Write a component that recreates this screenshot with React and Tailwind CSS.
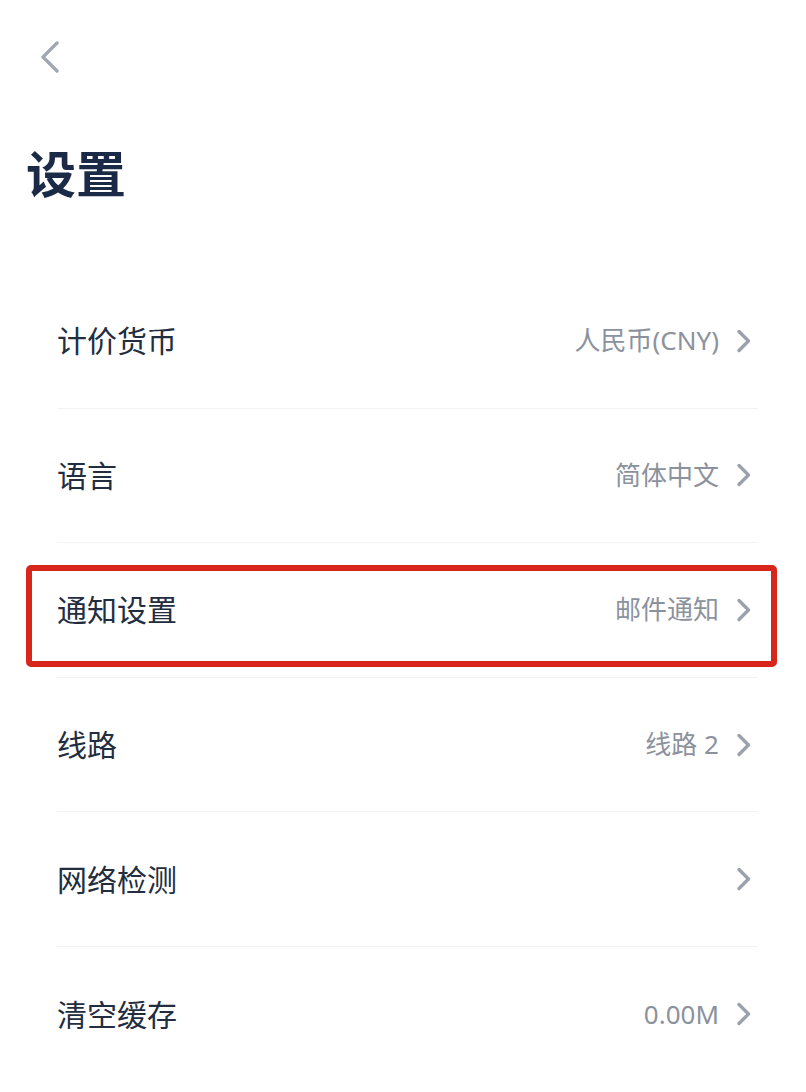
import React from 'react';

const rows = [
  { label: '计价货币', value: '人民币(CNY)' },
  { label: '语言', value: '简体中文' },
  { label: '通知设置', value: '邮件通知' },
  { label: '线路', value: '线路 2' },
  { label: '网络检测', value: '' },
  { label: '清空缓存', value: '0.00M' },
];

const Chevron = () => (
  <svg width="16" height="24" viewBox="0 0 16 24" fill="none" className="shrink-0">
    <path d="M3 2.5 L12.5 12 L3 21.5" stroke="#9ba1ab" strokeWidth="3.4" strokeLinecap="round" strokeLinejoin="round" />
  </svg>
);

export default function App() {
  return (
    <div
      className="relative w-[806px] h-[1092px] bg-white overflow-hidden"
      style={{ fontFamily: '"Noto Sans", "Noto Sans CJK SC", sans-serif' }}
    >
      {/* back button */}
      <div className="pt-[41px] pl-[40px]">
        <svg width="20" height="32" viewBox="0 0 20 32" fill="none">
          <path d="M17 2 L3 16 L17 30" stroke="#a2a8b3" strokeWidth="3.4" strokeLinecap="round" strokeLinejoin="round" />
        </svg>
      </div>

      {/* title */}
      <h1 className="mt-[71px] ml-[26px] text-[50px] leading-[60px] font-bold text-[#1b2b47]">设置</h1>

      {/* list */}
      <div className="mt-[70px] ml-[57px] mr-[48px]">
        {rows.map((r, i) => (
          <div
            key={r.label}
            className={`h-[134.6px] flex items-center justify-between ${i < rows.length - 1 ? 'border-b border-[#f2f3f5]' : ''}`}
          >
            <span className="text-[30px] text-[#222d3f]">{r.label}</span>
            <div className="flex items-center gap-[17px] pr-[6px]">
              {r.value && <span className="text-[26px] text-[#8c929d]">{r.value}</span>}
              <Chevron />
            </div>
          </div>
        ))}
      </div>

      {/* red highlight overlay */}
      <div className="absolute left-[26px] top-[565px] w-[751px] h-[102px] border-[6px] border-[#d7261b] rounded-[5px]" />
    </div>
  );
}
